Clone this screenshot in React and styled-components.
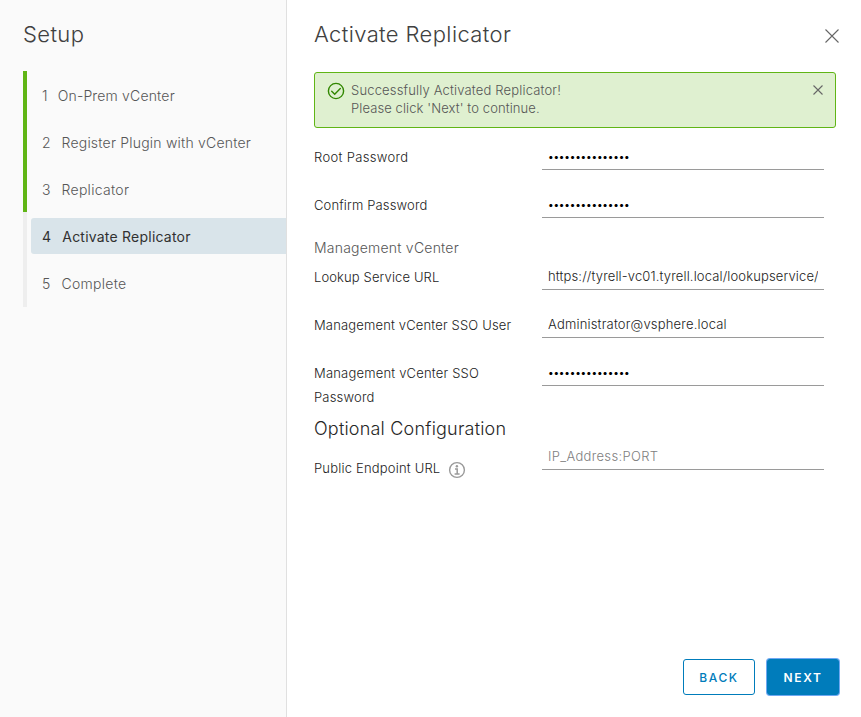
import React from 'react';
import styled, { createGlobalStyle } from 'styled-components';

const GlobalStyle = createGlobalStyle`
  *, *::before, *::after { box-sizing: border-box; }
  body { margin: 0; background: #fff; }
  body, input, button { font-family: Inter, "Open Sans", sans-serif; }
  h1, h2, h3, ol, p { margin: 0; padding: 0; font-weight: 300; }
`;

const Wizard = styled.div`
  display: flex;
  height: 717px;
  overflow: hidden;
  color: #404040;
  font-weight: 300;
`;

const Sidebar = styled.nav`
  flex: 0 0 287px;
  padding: 21px 0 0 23px;
  background: #fafafa;
  border-right: 1px solid #e0e0e0;
`;

const Title = styled.h1`
  height: 26px;
  font-size: 22px;
  line-height: 26px;
  letter-spacing: 0.38px;
  white-space: nowrap;
`;

const Steps = styled.ol`
  margin-top: 24px;
  list-style: none;
`;

const Step = styled.li`
  height: 47px;
  padding: 6px 0 5px 4px;
  border-left: 4px solid ${(p) => (p.$done ? '#60b515' : '#eee')};
  &:last-child { height: 48px; }
`;

const StepLabel = styled.div`
  display: flex;
  align-items: center;
  gap: ${(p) => p.$gap}px;
  height: 36px;
  padding: 1px 0 0 11px;
  border-radius: 3px 0 0 3px;
  background: ${(p) => (p.$active ? '#d9e4ea' : 'transparent')};
  color: ${(p) => (p.$active ? '#313131' : '#565656')};
  font-size: 14px;
  font-weight: ${(p) => (p.$active ? 400 : 300)};
  letter-spacing: ${(p) => p.$track}px;
  white-space: nowrap;
`;

const Main = styled.main`
  flex: 1;
  min-width: 0;
  display: flex;
  flex-direction: column;
  padding: 21px 22px 22px 27px;
`;

const Header = styled.header`
  display: flex;
  justify-content: space-between;
`;

const IconButton = styled.button`
  display: flex;
  width: ${(p) => p.$size}px;
  height: ${(p) => p.$size}px;
  margin: ${(p) => p.$margin};
  padding: 0;
  border: 0;
  background: none;
  color: #666;
`;

const Alert = styled.div`
  display: flex;
  flex: none;
  width: 522px;
  height: 56px;
  margin-top: 25px;
  padding: 9px 11px 9px 12px;
  border: 1px solid #60b515;
  border-radius: 3px;
  background: #dff0d0;
`;

const AlertText = styled.div`
  flex: 1;
  margin: -1px 0 0 6px;
  color: #565656;
  font-size: 13px;
  line-height: 18px;
`;

const AlertLine = styled.p`
  letter-spacing: ${(p) => p.$track}px;
`;

const Form = styled.form`
  display: flex;
  flex-direction: column;
  margin-top: 18px;
`;

const Row = styled.div`
  display: flex;
  align-items: flex-start;
  margin-bottom: ${(p) => p.$after ?? 24}px;
`;

const Label = styled.label`
  display: flex;
  flex: 0 0 228px;
  padding-right: 20px;
  margin: ${(p) => (p.$drop || 0) - 1}px 0 1px;
  color: #1c1c1c;
  font-size: 13px;
  line-height: 24px;
  letter-spacing: ${(p) => p.$track}px;
`;

const Field = styled.input`
  width: 282px;
  height: 24px;
  padding: 0 6px 4px;
  border: 0;
  border-bottom: 1px solid #9a9a9a;
  border-radius: 0;
  outline: 0;
  background: transparent;
  color: #1c1c1c;
  font-size: 13px;
  font-weight: 300;
  letter-spacing: ${(p) => p.$track || 0}px;
  &::placeholder { color: #808080; opacity: 1; }
`;

const PasswordField = styled(Field).attrs({ type: 'password', readOnly: true })`
  color: #000;
  font-size: 10px;
  font-weight: 400;
  letter-spacing: -0.19px;
`;

const GroupTitle = styled.h3`
  height: 24px;
  margin-bottom: 6px;
  color: #565656;
  font-size: 14px;
  line-height: 24px;
  letter-spacing: 0.22px;
`;

const SectionTitle = styled.h2`
  height: 24px;
  margin-bottom: 6px;
  color: #262626;
  font-size: 18px;
  line-height: 25px;
  letter-spacing: 0.2px;
`;

const Info = styled.svg`
  width: 18px;
  height: 18px;
  margin: 5px 0 0 8px;
`;

const Footer = styled.footer`
  display: flex;
  justify-content: flex-end;
  gap: 12px;
  margin-top: auto;
`;

const Button = styled.button`
  width: 72px;
  height: 36px;
  padding: 1px 0 0;
  border: 1px solid #007cbb;
  border-radius: 3px;
  background: ${(p) => (p.$primary ? '#007cbb' : '#fff')};
  box-shadow: ${(p) => (p.$primary ? '0 0 0 1px #6ea8f2' : 'none')};
  color: ${(p) => (p.$primary ? '#fff' : '#007cbb')};
  font-size: 12px;
  font-weight: ${(p) => (p.$primary ? 600 : 500)};
  letter-spacing: 1.6px;
`;

const Cross = ({ size, inset }) => (
  <svg width={size} height={size} viewBox={`0 0 ${size} ${size}`} fill="none" stroke="currentColor" strokeWidth="1.1">
    <path d={`M${inset} ${inset}L${size - inset} ${size - inset}M${size - inset} ${inset}L${inset} ${size - inset}`} />
  </svg>
);

const CheckCircle = () => (
  <svg width="18" height="18" viewBox="0 0 18 18" fill="none" stroke="#318700" strokeWidth="1.4">
    <circle cx="9" cy="9" r="7.6" />
    <path d="M4.7 9.2l3 3 5.6-5.6" strokeLinecap="round" />
  </svg>
);

const InfoCircle = () => (
  <Info viewBox="0 0 18 18" fill="none" stroke="#9a9a9a" strokeWidth="1.4">
    <circle cx="9" cy="9" r="7.4" />
    <circle cx="8.9" cy="5.2" r="1.2" fill="#9a9a9a" stroke="none" />
    <path d="M7 8h2.2v5M6.6 13.1h5" strokeWidth="1.5" />
  </Info>
);

const steps = [
  { name: 'On-Prem vCenter', gap: 10, track: 0.17, done: true },
  { name: 'Register Plugin with vCenter', gap: 10.7, track: 0.21, done: true },
  { name: 'Replicator', gap: 10.7, track: 0.3, done: true },
  { name: 'Activate Replicator', gap: 11, track: 0.22, active: true },
  { name: 'Complete', gap: 10.9, track: 0.29 },
];

const secret = 'x'.repeat(15);

export default function App() {
  return (
    <Wizard>
      <GlobalStyle />
      <Sidebar>
        <Title>Setup</Title>
        <Steps>
          {steps.map((s, i) => (
            <Step key={s.name} $done={s.done}>
              <StepLabel $active={s.active} $gap={s.gap} $track={s.track}>
                <span>{i + 1}</span>
                <span>{s.name}</span>
              </StepLabel>
            </Step>
          ))}
        </Steps>
      </Sidebar>
      <Main>
        <Header>
          <Title>Activate Replicator</Title>
          <IconButton type="button" aria-label="Close" $size={16} $margin="7px -1px 0 0">
            <Cross size={16} inset={1.5} />
          </IconButton>
        </Header>
        <Alert role="alert">
          <CheckCircle />
          <AlertText>
            <AlertLine $track={0.17}>Successfully Activated Replicator!</AlertLine>
            <AlertLine $track={0.1}>Please click 'Next' to continue.</AlertLine>
          </AlertText>
          <IconButton type="button" aria-label="Dismiss" $size={12} $margin="2px 0 0 0">
            <Cross size={12} inset={1.5} />
          </IconButton>
        </Alert>
        <Form>
          <Row>
            <Label $track={0.33}>Root Password</Label>
            <PasswordField value={secret} />
          </Row>
          <Row $after={18}>
            <Label $track={0.14}>Confirm Password</Label>
            <PasswordField value={secret} />
          </Row>
          <GroupTitle>Management vCenter</GroupTitle>
          <Row>
            <Label $track={0.12}>Lookup Service URL</Label>
            <Field readOnly value="https://tyrell-vc01.tyrell.local/lookupservice/" $track={0.14} />
          </Row>
          <Row>
            <Label $track={0.16}>Management vCenter SSO User</Label>
            <Field readOnly value="Administrator@vsphere.local" $track={0.19} />
          </Row>
          <Row $after={6}>
            <Label $track={0.19}>Management vCenter SSO Password</Label>
            <PasswordField value={secret} />
          </Row>
          <SectionTitle>Optional Configuration</SectionTitle>
          <Row>
            <Label $track={0.19} $drop={11}>
              Public Endpoint URL
              <InfoCircle />
            </Label>
            <Field placeholder="IP_Address:PORT" $track={0.33} />
          </Row>
        </Form>
        <Footer>
          <Button type="button">BACK</Button>
          <Button type="button" $primary>NEXT</Button>
        </Footer>
      </Main>
    </Wizard>
  );
}
